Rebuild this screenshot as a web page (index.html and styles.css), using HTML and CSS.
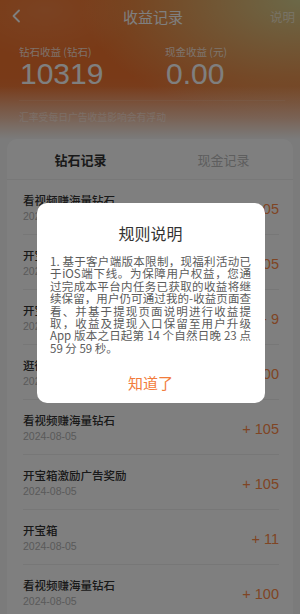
FILE: index.html
```html
<!DOCTYPE html>
<html lang="zh">
<head>
<meta charset="utf-8">
<title>收益记录</title>
<link rel="stylesheet" href="styles.css">
</head>
<body>
<div class="page">
  <header class="hero">
    <div class="nav">
      <svg class="back" width="10" height="14" viewBox="0 0 10 14"><path d="M8 1.5 L2.5 7 L8 12.5" fill="none" stroke="#fff" stroke-width="1.8" stroke-linecap="round" stroke-linejoin="round"/></svg>
      <div class="nav-title">收益记录</div>
      <div class="nav-right">说明</div>
    </div>
    <div class="stats">
      <div class="stat">
        <div class="stat-label">钻石收益 (钻石)</div>
        <div class="stat-value">10319</div>
      </div>
      <div class="stat">
        <div class="stat-label">现金收益 (元)</div>
        <div class="stat-value">0.00</div>
      </div>
    </div>
    <div class="hint">汇率受每日广告收益影响会有浮动</div>
  </header>

  <section class="card">
    <div class="tabs">
      <div class="tab active">钻石记录</div>
      <div class="tab">现金记录</div>
    </div>
    <ul class="list">
      <li class="row"><div class="info"><div class="name">看视频赚海量钻石</div><div class="date">2024-08-05</div></div><div class="amount">+ 105</div></li>
      <li class="row"><div class="info"><div class="name">开宝箱激励广告奖励</div><div class="date">2024-08-05</div></div><div class="amount">+ 105</div></li>
      <li class="row"><div class="info"><div class="name">开宝箱</div><div class="date">2024-08-05</div></div><div class="amount">- 9</div></li>
      <li class="row"><div class="info"><div class="name">逛街领钻石</div><div class="date">2024-08-05</div></div><div class="amount">+ 100</div></li>
      <li class="row"><div class="info"><div class="name">看视频赚海量钻石</div><div class="date">2024-08-05</div></div><div class="amount">+ 105</div></li>
      <li class="row"><div class="info"><div class="name">开宝箱激励广告奖励</div><div class="date">2024-08-05</div></div><div class="amount">+ 105</div></li>
      <li class="row"><div class="info"><div class="name">开宝箱</div><div class="date">2024-08-05</div></div><div class="amount">+ 11</div></li>
      <li class="row"><div class="info"><div class="name">看视频赚海量钻石</div><div class="date">2024-08-05</div></div><div class="amount">+ 100</div></li>
    </ul>
  </section>
</div>

<div class="mask">
  <div class="dialog">
    <div class="dialog-title">规则说明</div>
    <p class="dialog-body">1. 基于客户端版本限制，现福利活动已于iOS端下线。为保障用户权益，您通过完成本平台内任务已获取的收益将继续保留，用户仍可通过我的-收益页面查看、并基于提现页面说明进行收益提取，收益及提现入口保留至用户升级App 版本之日起第 14 个自然日晚 23 点 59 分 59 秒。</p>
    <div class="dialog-btn">知道了</div>
  </div>
</div>
</body>
</html>
```

FILE: styles.css
```css
* { box-sizing: border-box; }
html, body {
  margin: 0;
  padding: 0;
  height: 100%;
  overflow: hidden;
}
body {
  font-family: "Noto Sans CJK SC", "Noto Sans", sans-serif;
  background: #f6f6f6;
}
.page {
  width: 300px;
  height: 614px;
  overflow: hidden;
  background: #f6f6f6;
}

/* header */
.hero {
  padding: 0 15px 15px 19px;
  color: #fff;
  background:
    linear-gradient(180deg, rgba(246,246,246,0) 62%, rgba(246,246,246,0.55) 85%, #f6f6f6 100%),
    radial-gradient(ellipse 90px 50px at 45px 10px, rgba(255,255,255,0.12), rgba(255,255,255,0) 100%),
    radial-gradient(ellipse 220px 120px at 100% 0, rgba(214,214,150,0.95), rgba(214,214,150,0) 100%),
    linear-gradient(180deg, #f4742a 0%, #f27430 55%, #f0935a 100%);
}
.nav {
  height: 32px;
  display: grid;
  grid-template-columns: 1fr auto 1fr;
  align-items: center;
  margin: 0 -15px 0 -19px;
  padding: 0 5px 0 11px;
}
.back { display: block; }
.nav-title {
  font-size: 15px;
  color: #fff;
  letter-spacing: 0;
}
.nav-right {
  justify-self: end;
  font-size: 12.5px;
  color: rgba(255,255,255,0.6);
}
.stats {
  margin-top: 13px;
  display: grid;
  grid-template-columns: 146px 1fr;
  padding-bottom: 11px;
  border-bottom: 1px solid rgba(255,255,255,0.12);
}
.stat-label {
  font-size: 10.5px;
  line-height: 14px;
  color: rgba(255,255,255,0.8);
}
.stat-value {
  font-family: "Liberation Sans", Arial, sans-serif;
  font-size: 30px;
  line-height: 30px;
  color: #fff;
  margin-left: 1px;
}
.hint {
  margin-top: 9px;
  font-size: 9.8px;
  line-height: 14px;
  color: rgba(255,255,255,0.5);
}

/* card */
.card {
  margin: 0 7px;
  background: #fff;
  border-radius: 10px 10px 0 0;
  min-height: 480px;
}
.tabs {
  display: grid;
  grid-template-columns: 1fr 1fr;
  height: 41px;
  align-items: center;
  text-align: center;
  border-bottom: 1px solid #f0f0f0;
}
.tab {
  font-size: 13px;
  color: #bdbdbd;
  padding-left: 4px;
}
.tab.active {
  color: #333;
  font-weight: 700;
}
.list {
  list-style: none;
  margin: 0;
  padding: 0;
}
.row {
  margin: 0 14px 0 16px;
  padding: 12px 0 11px;
  border-bottom: 1px solid #eeeeee;
  display: flex;
  align-items: center;
  justify-content: space-between;
}
.name {
  font-size: 11.5px;
  line-height: 16px;
  color: #333;
  font-weight: 500;
}
.date {
  margin-top: 1px;
  font-family: "Liberation Sans", Arial, sans-serif;
  font-size: 10.5px;
  line-height: 14px;
  color: #b4b4b4;
}
.amount {
  font-family: "Liberation Sans", Arial, sans-serif;
  font-size: 14.5px;
  color: #ff8a48;
  margin-top: 2px;
}

/* dialog */
.mask {
  position: fixed;
  inset: 0;
  background: rgba(0,0,0,0.5);
  display: flex;
  align-items: center;
  justify-content: center;
  padding: 0 0 8px 2px;
}
.dialog {
  width: 228px;
  background: #fff;
  border-radius: 10px;
  padding: 19px 14px 10px 13px;
  display: flex;
  flex-direction: column;
}
.dialog-title {
  text-align: center;
  font-size: 16px;
  line-height: 22px;
  color: #333;
}
.dialog-body {
  margin: 11px 0 0;
  font-size: 11.5px;
  line-height: 12.35px;
  color: #5c5c5c;
  text-align: justify;
}
.dialog-btn {
  margin-top: 19px;
  text-align: center;
  font-size: 15px;
  line-height: 20px;
  color: #f27c3c;
}
```
